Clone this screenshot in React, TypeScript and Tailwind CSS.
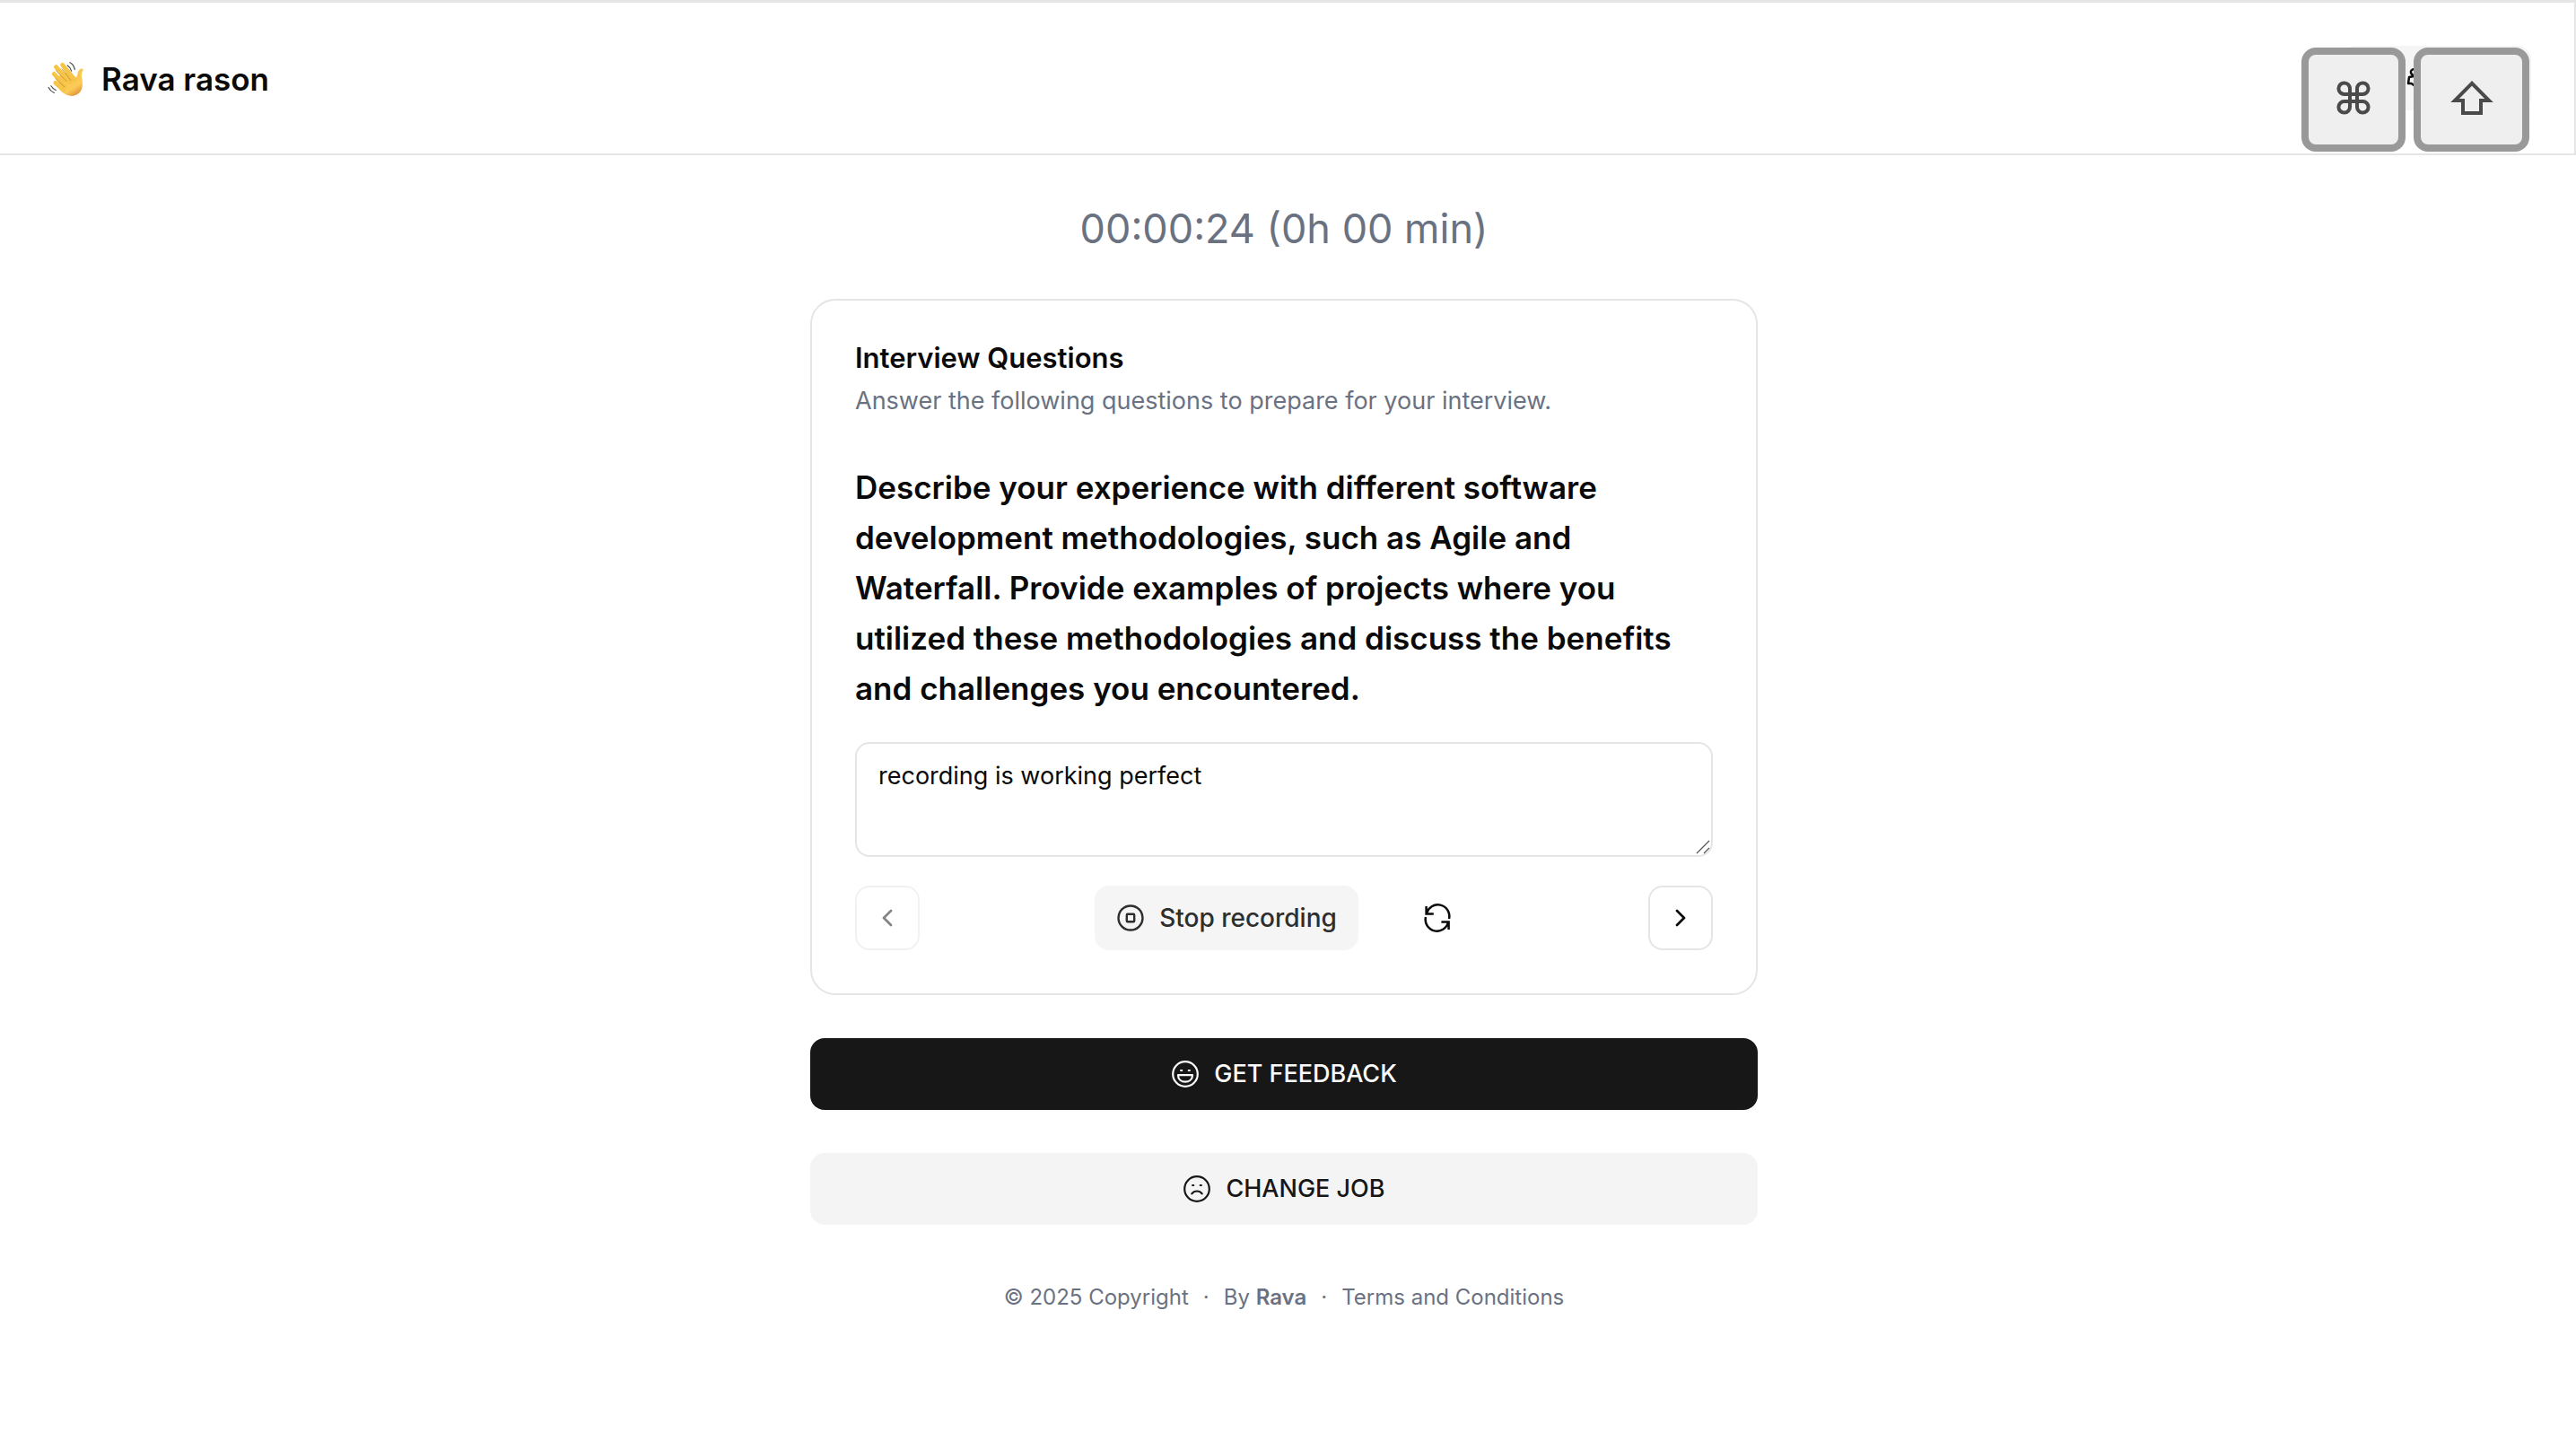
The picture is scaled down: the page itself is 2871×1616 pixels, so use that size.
import { ChevronLeft, ChevronRight } from 'lucide-react';

const focus = 'focus-visible:outline-2 focus-visible:outline-offset-2 focus-visible:outline-neutral-500';

function StopIcon() {
  return (
    <svg viewBox="0 0 32 32" className="size-8" fill="none" stroke="currentColor" strokeWidth="2.4" aria-hidden="true">
      <circle cx="16" cy="16" r="13.5" />
      <rect x="11.800" y="11.800" width="8.400" height="8.400" rx="1" />
    </svg>
  );
}

function RefreshIcon() {
  return (
    <svg viewBox="0 0 32 32" className="size-8" fill="none" stroke="currentColor" strokeWidth="2.500" aria-hidden="true">
      <path d="M3.600 3v8.400h8.200M29 17A12.800 12.800 0 0 0 4 11.200" />
      <path d="M28.600 29v-8.400h-8.200M3 15A12.800 12.800 0 0 0 28 20.800" />
    </svg>
  );
}

function Face({ happy }: { happy: boolean }) {
  return (
    <svg viewBox="0 0 32 32" className="size-8" fill="none" stroke="currentColor" strokeWidth="2.2" strokeLinecap="round" strokeLinejoin="round" aria-hidden="true">
      <circle cx="16" cy="16" r="13.8" />
      <path d="M10.300 12h2.800M18.900 12h2.800" strokeLinecap="butt" />
      {happy ? (
        <path d="M8 17.2h16c0 4.8-3.600 7.400-8 7.400s-8-2.600-8-7.400Z" />
      ) : (
        <path d="M10.300 21.400c1.600-2 3.600-2.900 5.700-2.900s4.100.9 5.700 2.900" />
      )}
    </svg>
  );
}

function CommandIcon() {
  return (
    <svg viewBox="0 0 38 38" className="size-[38px]" fill="none" stroke="currentColor" strokeWidth="4" aria-hidden="true">
      <path d="M15 15V9A6.300 6.300 0 1 0 9 15h20A6.300 6.300 0 1 0 23 9v20A6.300 6.300 0 1 0 29 23H9A6.300 6.300 0 1 0 15 29Z" />
    </svg>
  );
}

function ShiftIcon() {
  return (
    <svg viewBox="0 0 48 38" className="h-[38px] w-12" fill="none" stroke="currentColor" strokeWidth="4" aria-hidden="true">
      <path d="M24 2.800 5 22h9v14h20V22h9Z" />
    </svg>
  );
}

function LanguageIcon() {
  return (
    <svg viewBox="0 0 24 24" className="size-6" fill="none" stroke="currentColor" strokeWidth="2.500" strokeLinecap="round" strokeLinejoin="round" aria-hidden="true">
      <path d="M9 2C6 2 4.500 4 5 6s2 3 4 3.500M8 10l-5 1-1 7h3.500L9 20.500M12 3l6 4-3 6 4 7" />
    </svg>
  );
}

function WavingHand() {
  return (
    <svg viewBox="1 1 36 36" className="size-10" fill="none" strokeLinecap="round" aria-hidden="true">
      <defs>
        <linearGradient id="skin" x1="0.2" y1="0" x2="0.800" y2="1">
          <stop offset="0" stopColor="#f6c544" />
          <stop offset="0.700" stopColor="#fccb58" />
          <stop offset="1" stopColor="#d98b32" />
        </linearGradient>
      </defs>
      <g fill="url(#skin)">
        <path d="M13 29.500 11 17l12-7 6 7.500c1-.4 1.600-1.400 1.900-3 .5-3 1.700-5.300 4-5.800 1.700-.2 2.300 1 1.500 2-1.400 2-1.500 4.300-1 6.800 1 6 1.100 11.600-2.600 15.500-5.500 5-12.500 3-16.800-.5Z" />
      </g>
      <path d="m9 23 8 7M7.500 14l11 12M9.500 7l14 15M16 5l12 15" stroke="#f6c548" strokeWidth="4.400" />
      <path d="m9.500 10.500 10.500 11M15.500 9l9 11.500M9 18.500l9 8.500" stroke="#cf9430" strokeWidth="0.900" />
      <path d="M21 5.500c2 1.300 3.300 3 4 5.500M23.500 2.500c2.700 1.500 4.300 4 4.800 7M4.500 26c1.200 2 2.500 3.300 4.800 4.300M2 27.500c1.400 2.800 3.200 4.300 5.600 5.500" stroke="#4b4b4b" strokeWidth="1.100" />
    </svg>
  );
}

export default function App() {
  return (
    <div className="min-h-screen bg-white font-['Inter',sans-serif] text-neutral-950">
      <header className="relative flex h-[173px] items-center justify-between border-t-3 border-r-2 border-b-2 border-neutral-200 pr-12 pl-[53px]">
        <a href="#home" className={`flex items-center gap-5 pt-px text-[35px] leading-14 font-semibold ${focus}`}>
          <WavingHand />
          Rava rason
        </a>
        <button type="button" aria-label="Language" className="flex h-18 w-[211px] items-center rounded-2xl bg-neutral-100 pl-18">
          <LanguageIcon />
        </button>
        <div className="absolute top-[50px] right-[50px] flex gap-[9px] text-[#4a4a4a]">
          <kbd className="flex h-[116px] w-[116px] items-center justify-center rounded-2xl border-8 border-[#999] bg-[#efefef] pb-1" aria-label="Command">
            <CommandIcon />
          </kbd>
          <kbd className="flex h-[116px] w-[129px] items-center justify-center rounded-2xl border-8 border-[#999] bg-[#efefef] pb-1" aria-label="Shift">
            <ShiftIcon />
          </kbd>
        </div>
      </header>

      <div className="pr-[9px]">
        <main className="mx-auto flex w-full max-w-[1056px] flex-col pt-[50px]">
          <p className="text-center text-[45px] leading-16 text-gray-500">00:00:24 (0h 00 min)</p>

          <section className="mt-[46px] flex flex-col rounded-[28px] border-2 border-neutral-200 p-12">
            <h1 className="text-[31px] leading-8 font-semibold">Interview Questions</h1>
            <p className="mt-3 text-[27px] leading-10 text-gray-500">Answer the following questions to prepare for your interview.</p>
            <h2 className="mt-12 text-[35px] leading-14 font-semibold">
              Describe your experience with different software development methodologies, such as Agile and Waterfall. Provide examples of projects where you utilized these methodologies and discuss the benefits and challenges you encountered.
            </h2>
            <div className="relative mt-8">
              <textarea
                aria-label="Your answer"
                defaultValue="recording is working perfect"
                className="block h-32 w-full resize-none rounded-2xl border-2 border-neutral-200 px-6 py-4 text-[27px] leading-10"
              />
              <svg viewBox="0 0 16 16" className="pointer-events-none absolute right-[3px] bottom-[3px] size-4" stroke="#555" strokeWidth="1.200" aria-hidden="true">
                <path d="M1 15 15 1M9 15l6-6" />
              </svg>
            </div>
            <div className="mt-8 flex items-center justify-between">
              <button type="button" disabled aria-label="Previous question" className="flex size-18 items-center justify-center rounded-2xl border-2 border-neutral-200 opacity-50">
                <ChevronLeft className="size-8" />
              </button>
              <div className="flex items-center gap-12">
                <button type="button" className="flex h-18 items-center gap-4 rounded-2xl bg-[#f5f5f5] px-6 text-[28px] font-medium text-[#2e2e2e]">
                  <StopIcon />
                  Stop recording
                </button>
                <button type="button" aria-label="Reset answer" className="flex h-18 items-center px-6">
                  <RefreshIcon />
                </button>
              </div>
              <button type="button" aria-label="Next question" className="flex size-18 items-center justify-center rounded-2xl border-2 border-neutral-200">
                <ChevronRight className="size-8" />
              </button>
            </div>
          </section>

          <button type="button" className="mt-12 flex h-20 items-center justify-center gap-4 rounded-2xl bg-neutral-900 text-[27px] font-medium text-neutral-50">
            <Face happy />
            GET FEEDBACK
          </button>
          <button type="button" className="mt-12 flex h-20 items-center justify-center gap-4 rounded-2xl bg-[#f4f4f4] text-[27px] font-medium text-neutral-900">
            <Face happy={false} />
            CHANGE JOB
          </button>
        </main>

        <footer className="mt-[65px] flex justify-center gap-4 text-[24px] leading-8 text-gray-500">
          <span>© 2025 Copyright</span>
          <span>·</span>
          <span>By <a href="#rava" className="font-semibold">Rava</a></span>
          <span>·</span>
          <a href="#terms">Terms and Conditions</a>
        </footer>
      </div>
    </div>
  );
}
